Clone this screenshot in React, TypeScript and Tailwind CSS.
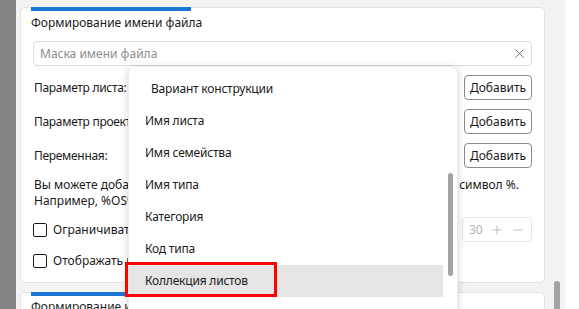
import { X, Plus, Minus } from "lucide-react";

const menuItems = [
  "Вариант конструкции",
  "Имя листа",
  "Имя семейства",
  "Имя типа",
  "Категория",
  "Код типа",
  "Коллекция листов",
];

function AddRow({ label }: { label: string }) {
  return (
    <div className="flex items-center justify-between h-[25px] pl-[1px]">
      <span className="tracking-[-0.3px]">{label}</span>
      <button className="h-[25px] w-[68px] border border-[#8a8a8a] rounded-[4px] bg-white text-[#1a1a1a]">
        Добавить
      </button>
    </div>
  );
}

function Checkbox({ label }: { label: string }) {
  return (
    <label className="flex items-center gap-[6px]">
      <span className="w-[14px] h-[14px] border border-[#1a1a1a] rounded-[2px] bg-white" />
      <span>{label}</span>
    </label>
  );
}

export default function App() {
  return (
    <div className="w-[579px] h-[309px] overflow-hidden flex bg-white font-['Noto_Sans',sans-serif] text-[12px] text-[#1a1a1a]">
      <div className="w-[16px] bg-[#858585]" />
      <div className="relative w-[549px] bg-[#f3f3f3] pl-[4px] pt-[7px]">
        {/* card 1 */}
        <div className="relative w-[525px] h-[276px] bg-white border border-[#e3e3e3] rounded-[5px] px-[12px]">
          <div className="absolute -top-[1px] left-[10px] w-[160px] h-[4px] bg-[#1976d2]" />
          <div className="h-[19px] mt-[5px] -ml-[2px] leading-[19px]">Формирование имени файла</div>
          <div className="mt-[9px] h-[25px] border border-[#dcdcdc] rounded-[4px] flex items-center justify-between pl-[6px] pr-[4px]">
            <span className="text-[#8c8c8c]">Маска имени файла</span>
            <X size={15} strokeWidth={1.3} className="text-[#5a5a5a]" />
          </div>
          <div className="mt-[9px] flex flex-col gap-[9px]">
            <AddRow label="Параметр листа:" />
            <AddRow label="Параметр проекта:" />
            <AddRow label="Переменная:" />
          </div>
          <div className="mt-[9px] leading-[16px] pl-[1px] whitespace-nowrap">
            <div>Вы можете добавить текст, параметр или переменную, используя также символ %.</div>
            <div>Например, %OS% - текущая ОС</div>
          </div>
          <div className="mt-[8px] flex items-center justify-between h-[25px]">
            <Checkbox label="Ограничивать длину имени файла" />
            <div className="w-[70px] h-[25px] border border-[#e6e6e6] rounded-[4px] flex items-center gap-[7px] pl-[6px] text-[#b4b4b4]">
              <span>30</span>
              <Plus size={14} strokeWidth={1.5} />
              <Minus size={14} strokeWidth={1.5} />
            </div>
          </div>
          <div className="mt-[6px] h-[25px] flex items-center">
            <Checkbox label="Отображать имена листов" />
          </div>
        </div>
        {/* card 2 */}
        <div className="relative mt-[9px] w-[525px] h-[40px] bg-white border border-[#e3e3e3] rounded-[5px] px-[12px]">
          <div className="absolute -top-[1px] left-[10px] w-[160px] h-[4px] bg-[#1976d2]" />
          <div className="h-[19px] mt-[4px] -ml-[2px] leading-[19px]">Формирование имени файла</div>
        </div>
        {/* outer scrollbar */}
        <div className="absolute left-[538px] top-[281px] w-[6px] h-[40px] rounded-full bg-[#a3a3a3]" />

        {/* dropdown popup */}
        <div className="absolute left-[112px] top-[66px] w-[330px] h-[260px] bg-white rounded-[7px] shadow-[0_2px_8px_rgba(0,0,0,0.18)] border border-[#ececec] pt-[6px]">
          {menuItems.map((item, i) => (
            <div
              key={item}
              className={
                "h-[32px] w-[314px] flex items-center tracking-[-0.2px] " +
                (i === 0 ? "pl-[22px] " : "pl-[16px] ") +
                (i === 6 ? "bg-[#e5e5e5]" : "")
              }
            >
              {item}
            </div>
          ))}
          <div className="absolute left-[319px] top-[106px] w-[5px] h-[103px] rounded-full bg-[#a3a3a3]" />
          {/* highlight marker */}
          <div className="absolute left-[-4px] top-[195px] w-[152px] h-[35px] border-[3px] border-[#ff0000]" />
        </div>
      </div>
    </div>
  );
}
